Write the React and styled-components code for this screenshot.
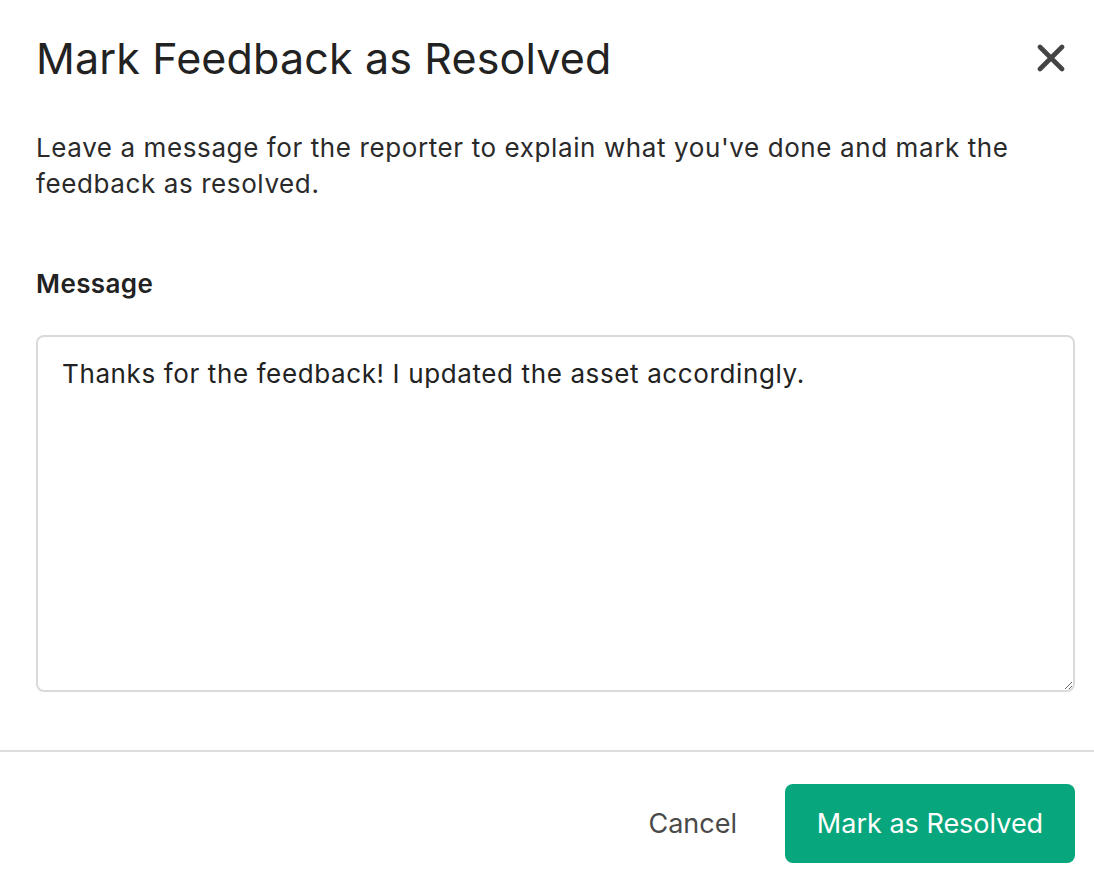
import React, { useState } from 'react';
import styled, { createGlobalStyle } from 'styled-components';

const GlobalStyle = createGlobalStyle`
    html, body {
        margin: 0;
        padding: 0;
        background: #ffffff;
    }

    body {
        font-family: Inter, "Noto Sans", "Liberation Sans", sans-serif;
        color: #222222;
        -webkit-font-smoothing: antialiased;
    }
`;

const CloseIcon = () => (
    <svg width="28" height="28" viewBox="0 0 28 28" fill="none">
        <path d="M3 3 L25 25 M25 3 L3 25" stroke="#444444" strokeWidth="4.6" strokeLinecap="round" />
    </svg>
);

const App = () => {
    const [message, setMessage] = useState('Thanks for the feedback! I updated the asset accordingly.');

    return (
        <Modal>
            <GlobalStyle />

            <Header>
                <Title>Mark Feedback as Resolved</Title>
                <CloseButton aria-label="Close">
                    <CloseIcon />
                </CloseButton>
            </Header>

            <Body>
                <Description>
                    Leave a message for the reporter to explain what you've done and mark the feedback as resolved.
                </Description>

                <Label htmlFor="resolve-message">Message</Label>
                <MessageInput
                    id="resolve-message"
                    value={ message }
                    onChange={ event => setMessage(event.target.value) }
                />
            </Body>

            <Footer>
                <TextButton>Cancel</TextButton>
                <PrimaryButton>Mark as Resolved</PrimaryButton>
            </Footer>
        </Modal>
    );
};

const Modal = styled.div`
    width: 1094px;
    min-height: 886px;
    display: flex;
    flex-direction: column;
    box-sizing: border-box;
`;

const Header = styled.div`
    display: flex;
    align-items: center;
    justify-content: space-between;
    padding: 34px 19px 0 36px;
`;

const Title = styled.h1`
    margin: 0;
    font-size: 43px;
    line-height: 48px;
    font-weight: 400;
    letter-spacing: 0.15px;
    color: #222222;
`;

const CloseButton = styled.button`
    width: 48px;
    height: 48px;
    display: flex;
    align-items: center;
    justify-content: center;
    padding: 0;
    border: 0;
    background: transparent;
    cursor: pointer;
`;

const Body = styled.div`
    display: flex;
    flex-direction: column;
    padding: 48px 19px 58px 36px;
`;

const Description = styled.p`
    margin: 0 0 64px 0;
    font-size: 26px;
    line-height: 36px;
    letter-spacing: 0.6px;
    color: #2a2a2a;
    max-width: 1010px;
`;

const Label = styled.label`
    font-size: 26px;
    line-height: 36px;
    letter-spacing: 0.4px;
    font-weight: 600;
    color: #222222;
    margin-bottom: 33px;
`;

const MessageInput = styled.textarea`
    box-sizing: border-box;
    width: 100%;
    height: 357px;
    padding: 19px 24px;
    border: 2px solid #dadada;
    border-radius: 8px;
    font-family: inherit;
    font-size: 26px;
    line-height: 36px;
    letter-spacing: 0.62px;
    color: #222222;
    outline: none;
`;

const Footer = styled.div`
    display: flex;
    align-items: center;
    justify-content: flex-end;
    gap: 24px;
    padding: 32px 19px 23px 36px;
    border-top: 2px solid #dddddd;
`;

const TextButton = styled.button`
    border: 0;
    background: transparent;
    font-family: inherit;
    font-size: 27px;
    color: #4a4a4a;
    padding: 0 24px;
    height: 79px;
    cursor: pointer;
`;

const PrimaryButton = styled.button`
    border: 0;
    border-radius: 8px;
    background: #07a67c;
    color: #ffffff;
    font-family: inherit;
    font-size: 27px;
    font-weight: 400;
    height: 79px;
    width: 290px;
    cursor: pointer;
`;

export default App;
